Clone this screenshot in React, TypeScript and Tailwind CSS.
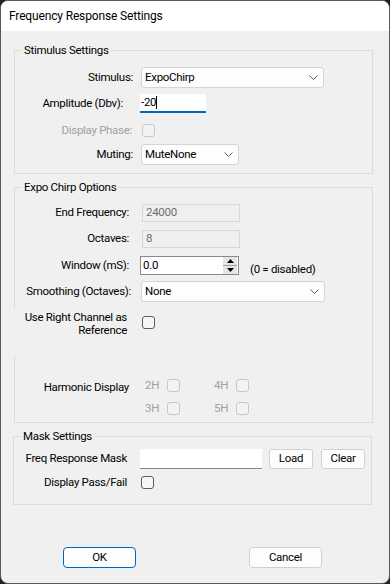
import React from "react";

const font = "font-['Roboto',sans-serif]";

function Chevron() {
  return (
    <svg width="9" height="5" viewBox="0 0 9 5" className="shrink-0">
      <path d="M0.5 0.5 L4.5 4.5 L8.5 0.5" fill="none" stroke="#606060" strokeWidth="1" />
    </svg>
  );
}

function Dropdown({ value, width }: { value: string; width: string }) {
  return (
    <div
      className={`${width} h-[21px] bg-[#fdfdfd] border border-[#d4d4d4] rounded-[3px] flex items-center justify-between pl-[3px] pr-[5px] text-black`}
    >
      <span>{value}</span>
      <Chevron />
    </div>
  );
}

function Check({ disabled }: { disabled?: boolean }) {
  return (
    <div
      className={
        disabled
          ? "w-[13px] h-[13px] rounded-[3px] border border-[#c8c8c8] bg-[#f3f3f3] shrink-0"
          : "w-[13px] h-[13px] rounded-[3px] border border-[#5c5c5c] bg-[#f6f6f6] shrink-0"
      }
    />
  );
}

function Legend({ children }: { children: React.ReactNode }) {
  return <legend className="ml-[7px] px-[2px] leading-[16px] text-black">{children}</legend>;
}

export default function App() {
  return (
    <div className={`w-[390px] h-[584px] bg-[#202020] ${font} text-[11.5px] tracking-[-0.3px] text-black`}>
      <div className="w-full h-full rounded-[8px] border border-[#585858] bg-[#f0f0f0] overflow-hidden flex flex-col">
        {/* Title bar */}
        <div className="h-[30px] bg-white flex items-center pl-[8px] shrink-0 text-[12px] tracking-[-0.15px]">
          Frequency Response Settings
        </div>

        {/* Stimulus Settings */}
        <fieldset className="mt-[11px] ml-[13px] w-[359px] border border-[#dcdcdc] pb-[8px]">
          <Legend>Stimulus Settings</Legend>
          <div className="mt-[9px] flex items-center h-[21px]">
            <div className="w-[118px] text-right">Stimulus:</div>
            <div className="ml-[8px]">
              <Dropdown value="ExpoChirp" width="w-[183px]" />
            </div>
          </div>
          <div className="mt-[6px] flex items-center h-[19px]">
            <div className="w-[108px] text-right">Amplitude (Dbv):</div>
            <div className="ml-[17px] w-[66px] h-[19px] bg-white border-b-2 border-[#0067c0] flex items-center pl-[1px]">
              <span>-20</span>
              <span className="w-px h-[13px] bg-black" />
            </div>
          </div>
          <div className="mt-[11px] flex items-center h-[13px]">
            <div className="w-[117px] text-right text-[#a0a0a0]">Display Phase:</div>
            <div className="ml-[10px]">
              <Check disabled />
            </div>
          </div>
          <div className="mt-[7px] flex items-center h-[21px]">
            <div className="w-[118px] text-right">Muting:</div>
            <div className="ml-[8px]">
              <Dropdown value="MuteNone" width="w-[98px]" />
            </div>
          </div>
        </fieldset>

        {/* Expo Chirp Options */}
        <fieldset className="mt-[5px] ml-[13px] w-[359px] border border-[#dcdcdc] pb-[7px]">
          <Legend>Expo Chirp Options</Legend>
          <div className="mt-[9px] flex items-center h-[18px]">
            <div className="w-[114px] text-right">End Frequency:</div>
            <div className="ml-[13px] w-[98px] h-[18px] bg-[#f0f0f0] border border-[#d7d7d7] flex items-center pl-[3px] text-[#6d6d6d]">
              24000
            </div>
          </div>
          <div className="mt-[8px] flex items-center h-[18px]">
            <div className="w-[114px] text-right">Octaves:</div>
            <div className="ml-[13px] w-[98px] h-[18px] bg-[#f0f0f0] border border-[#d7d7d7] flex items-center pl-[3px] text-[#6d6d6d]">
              8
            </div>
          </div>
          <div className="mt-[8px] flex items-center h-[19px]">
            <div className="w-[114px] text-right">Window (mS):</div>
            <div className="ml-[11px] w-[99px] h-[19px] bg-white border border-[#8a8a8a] flex items-center justify-between pl-[2px]">
              <span>0.0</span>
              <div className="w-[14px] h-[17px] flex flex-col mr-[1px]">
                <div className="h-[8px] bg-[#e6e6e6] flex items-center justify-center">
                  <svg width="7" height="4" viewBox="0 0 7 4">
                    <path d="M3.5 0 L7 4 L0 4 Z" fill="#000" />
                  </svg>
                </div>
                <div className="h-px bg-[#9c9c9c]" />
                <div className="h-[8px] bg-[#e6e6e6] flex items-center justify-center">
                  <svg width="7" height="4" viewBox="0 0 7 4">
                    <path d="M0 0 L7 0 L3.5 4 Z" fill="#000" />
                  </svg>
                </div>
              </div>
            </div>
            <div className="ml-[11px] mt-[8px]">(0 = disabled)</div>
          </div>
          <div className="mt-[6px] flex items-center h-[21px]">
            <div className="w-[116px] text-right">Smoothing (Octaves):</div>
            <div className="ml-[10px]">
              <Dropdown value="None" width="w-[184px]" />
            </div>
          </div>
          <div className="mt-[7px] flex items-start h-[47px]">
            <div className="-ml-[2px] w-[114px] h-[47px] bg-[#f0f0f0] text-right leading-[13px] pt-[2px]">
              Use Right Channel as
              <br />
              Reference
            </div>
            <div className="ml-[15px] mt-[7px]">
              <Check />
            </div>
          </div>
          <div className="mt-[23px] flex items-start">
            <div className="w-[114px] text-right mt-[1px] leading-[14px]">Harmonic Display</div>
            <div className="ml-[16px] grid grid-cols-[69px_auto] gap-y-[10px] text-[#a0a0a0]">
              <div className="flex items-center h-[13px]">
                <span className="w-[22px]">2H</span>
                <Check disabled />
              </div>
              <div className="flex items-center h-[13px]">
                <span className="w-[22px]">4H</span>
                <Check disabled />
              </div>
              <div className="flex items-center h-[13px]">
                <span className="w-[22px]">3H</span>
                <Check disabled />
              </div>
              <div className="flex items-center h-[13px]">
                <span className="w-[22px]">5H</span>
                <Check disabled />
              </div>
            </div>
          </div>
        </fieldset>

        {/* Mask Settings */}
        <fieldset className="mt-[5px] ml-[12px] w-[359px] border border-[#dcdcdc] pb-[15px]">
          <Legend>Mask Settings</Legend>
          <div className="mt-[5px] flex items-center h-[20px]">
            <div className="w-[113px] text-right">Freq Response Mask</div>
            <div className="ml-[13px] w-[122px] h-[20px] bg-white border-b border-[#8a8a8a]" />
            <button className="ml-[7px] w-[44px] h-[20px] bg-[#fdfdfd] border border-[#d0d0d0] rounded-[3px]">
              Load
            </button>
            <button className="ml-[8px] w-[44px] h-[20px] bg-[#fdfdfd] border border-[#d0d0d0] rounded-[3px]">
              Clear
            </button>
          </div>
          <div className="mt-[7px] flex items-center h-[13px]">
            <div className="w-[113px] text-right">Display Pass/Fail</div>
            <div className="ml-[14px]">
              <Check />
            </div>
          </div>
        </fieldset>

        {/* Buttons */}
        <div className="mt-[42px] flex items-center">
          <button className="ml-[62px] w-[73px] h-[21px] bg-[#fdfdfd] border border-[#0067c0] rounded-[4px]">
            OK
          </button>
          <button className="ml-[113px] w-[73px] h-[21px] bg-[#fdfdfd] border border-[#d0d0d0] rounded-[4px]">
            Cancel
          </button>
        </div>
      </div>
    </div>
  );
}
